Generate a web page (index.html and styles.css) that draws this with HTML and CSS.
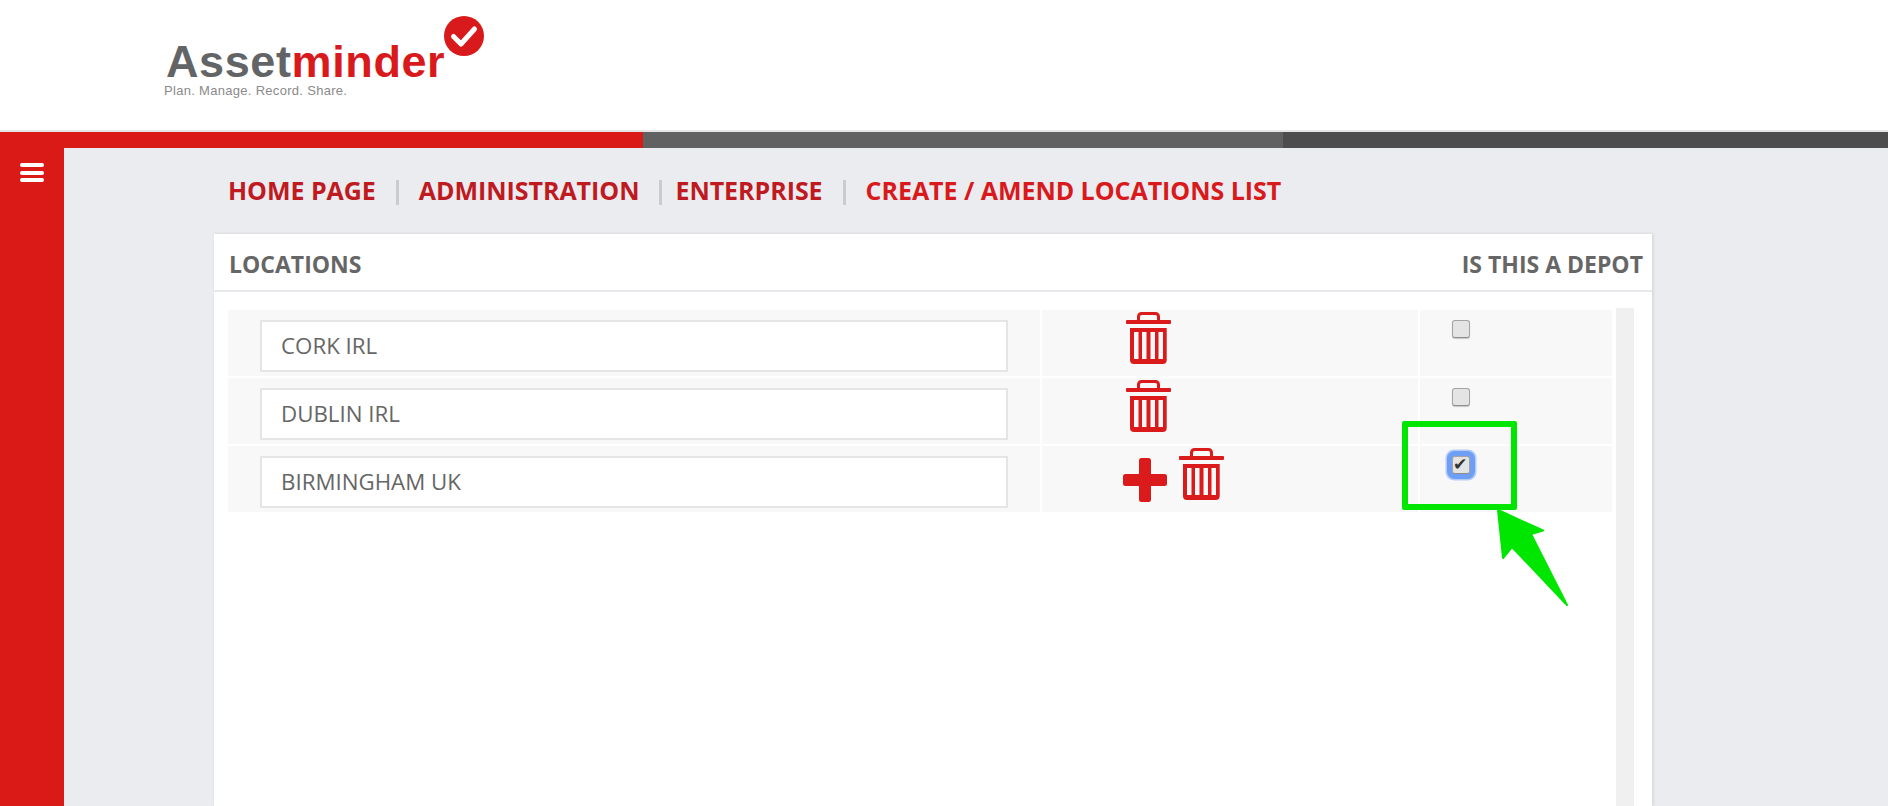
FILE: index.html
```html
<!DOCTYPE html>
<html lang="en">
<head>
    <title>Create / Amend Locations List</title>
    <link rel="stylesheet" href="styles.css">
</head>
<body>

<svg class="icon-defs" width="0" height="0">
    <symbol id="trash" viewBox="0 0 45 52">
        <path d="M12.5 9V4.5a3 3 0 0 1 3-3h14a3 3 0 0 1 3 3V9" fill="none" stroke="currentColor" stroke-width="3"/>
        <rect x="0" y="8" width="45" height="4" rx="1" fill="currentColor"/>
        <path fill="currentColor" fill-rule="evenodd" d="M4 16h36.7v32a4 4 0 0 1-4 4H8a4 4 0 0 1-4-4z M8 20h4.5v27H8z M16 20h4.5v27H16z M24.5 20h4.5v27h-4.5z M32.5 20h4.5v27h-4.5z"/>
    </symbol>
</svg>

<header class="site-header">
    <div class="logo">
        <svg class="logo-badge" viewBox="0 0 40 40">
            <circle cx="20" cy="20" r="20" fill="#d81a1c"/>
            <path d="M9.5 20.5l7.5 7.5L30.5 13" fill="none" stroke="#fff" stroke-width="5" stroke-linecap="round" stroke-linejoin="round"/>
        </svg>
        <div class="logo-name">Asset<span class="logo-red">minder</span></div>
        <div class="logo-tag">Plan. Manage. Record. Share.</div>
    </div>
</header>

<div class="color-bar">
    <div class="bar-red"></div>
    <div class="bar-grey"></div>
    <div class="bar-dark"></div>
</div>

<div class="layout">
    <aside class="sidebar">
        <button type="button" class="menu-btn" aria-label="Menu">
            <span></span>
            <span></span>
            <span></span>
        </button>
    </aside>

    <main class="content">
        <nav class="breadcrumb">
            <a href="#">HOME PAGE</a>
            <span class="sep"></span>
            <a href="#">ADMINISTRATION</a>
            <span class="sep sep-tight"></span>
            <a href="#">ENTERPRISE</a>
            <span class="sep"></span>
            <a href="#" class="current">CREATE / AMEND LOCATIONS LIST</a>
        </nav>

        <section class="card">
            <div class="card-head">
                <span>LOCATIONS</span>
                <span>IS THIS A DEPOT</span>
            </div>
            <div class="card-body">
                <div class="rows">
                    <div class="row">
                        <div class="cell cell-name"><input type="text" value="CORK IRL"></div>
                        <div class="cell cell-actions">
                            <svg class="trash"><use href="#trash"/></svg>
                        </div>
                        <div class="cell cell-check"><input type="checkbox"></div>
                    </div>
                    <div class="row">
                        <div class="cell cell-name"><input type="text" value="DUBLIN IRL"></div>
                        <div class="cell cell-actions">
                            <svg class="trash"><use href="#trash"/></svg>
                        </div>
                        <div class="cell cell-check"><input type="checkbox"></div>
                    </div>
                    <div class="row">
                        <div class="cell cell-name"><input type="text" value="BIRMINGHAM UK"></div>
                        <div class="cell cell-actions has-add">
                            <svg class="plus" viewBox="0 0 44 44">
                                <path fill="currentColor" d="M16 2.500A2.500 2.500 0 0 1 18.500 0h7A2.500 2.500 0 0 1 28 2.500V16h13.500a2.500 2.500 0 0 1 2.500 2.500v7a2.500 2.500 0 0 1-2.500 2.500H28v13.500a2.500 2.500 0 0 1-2.500 2.500h-7a2.500 2.500 0 0 1-2.500-2.500V28H2.500A2.500 2.500 0 0 1 0 25.500v-7A2.500 2.500 0 0 1 2.500 16H16z"/>
                            </svg>
                            <svg class="trash"><use href="#trash"/></svg>
                        </div>
                        <div class="cell cell-check"><input type="checkbox" class="focused" checked></div>
                    </div>
                </div>
                <div class="scroll-track"></div>
            </div>
        </section>
    </main>
</div>

<!-- green callout drawn over the screenshot -->
<div class="callout-box"></div>
<svg class="callout-arrow" viewBox="0 0 80 105">
    <path d="M2 2L47 22.500L35 26L71 97L16 39L7 50z" fill="#00e600" stroke="#00e600" stroke-width="2" stroke-linejoin="round"/>
</svg>

</body>
</html>
```

FILE: styles.css
```css
* {
  box-sizing: border-box;
}
html,
body {
  height: 100%;
}
body {
  margin: 0;
  height: 806px;
  overflow: hidden;
  background-color: #ebecf0;
  font-family: "Open Sans", sans-serif;
  display: flex;
  flex-direction: column;
  position: relative;
}
.icon-defs {
  position: absolute;
}

.site-header {
  height: 132px;
  background-color: white;
  border-bottom: 2px solid #e6e6e6;
  flex: none;
}
.logo {
  position: relative;
  width: 300px;
  margin-left: 164px;
  padding-top: 40px;
}
.logo-name {
  margin-left: 2px;
  font-family: "Liberation Sans", sans-serif;
  font-weight: bold;
  font-size: 45px;
  line-height: 44px;
  letter-spacing: 0.6px;
  color: #636466;
}
.logo-red {
  color: #d81a1c;
}
.logo-tag {
  font-family: "Liberation Sans", sans-serif;
  font-size: 13px;
  line-height: 14px;
  letter-spacing: 0.3px;
  color: #8a8a8a;
}
.logo-badge {
  position: absolute;
  left: 280px;
  top: 16px;
  width: 40px;
  height: 40px;
}

.color-bar {
  display: flex;
  height: 16px;
  flex: none;
}
.bar-red {
  width: 643px;
  background-color: #d91a17;
}
.bar-grey {
  width: 640px;
  background-color: #616161;
}
.bar-dark {
  flex: 1;
  background-color: #4d4d4d;
}

.layout {
  display: flex;
  flex: 1;
  min-height: 0;
}
.sidebar {
  width: 64px;
  flex: none;
  background-color: #d91a17;
  padding: 15px 0 0 20px;
}
.menu-btn {
  display: flex;
  flex-direction: column;
  gap: 3.500px;
  width: 24px;
  padding: 0;
  border: none;
  background: none;
}
.menu-btn span {
  display: block;
  height: 4px;
  border-radius: 2px;
  background-color: white;
}

.content {
  flex: 1;
  min-width: 0;
  padding: 0 236px 0 150px;
  display: flex;
  flex-direction: column;
}
.breadcrumb {
  display: flex;
  align-items: center;
  height: 86px;
  padding: 0 0 2px 14px;
  font-size: 25px;
  font-weight: bold;
  letter-spacing: -0.04px;
}
.breadcrumb a {
  color: #bf1a1f;
  text-decoration: none;
}
.breadcrumb a.current {
  color: #d91a1d;
}
.sep {
  width: 3px;
  height: 25px;
  margin: 4px 20px 0;
  background-color: #cbcbcd;
}
.sep-tight {
  margin-right: 13px;
}

.card {
  flex: 1;
  background-color: white;
  box-shadow: 1px 0 3px rgba(0, 0, 0, 0.12);
  display: flex;
  flex-direction: column;
  min-height: 0;
}
.card-head {
  display: flex;
  justify-content: space-between;
  align-items: center;
  height: 58px;
  padding: 4px 9px 0 15px;
  border-bottom: 2px solid #e8e9ed;
  color: #666;
  font-size: 23px;
  font-weight: bold;
  flex: none;
}
.card-body {
  flex: 1;
  display: flex;
  align-items: stretch;
  padding: 16px 18px 0 14px;
  gap: 4px;
  min-height: 0;
}
.rows {
  flex: 1;
  padding-top: 2px;
  display: flex;
  flex-direction: column;
  gap: 2px;
}
.row {
  display: grid;
  grid-template-columns: 812px 376px 192px;
  gap: 2px;
  height: 66px;
}
.cell {
  background-color: #f8f8f8;
}
.cell-name {
  padding: 10px 0 0 32px;
}
.cell-name input {
  width: 748px;
  height: 52px;
  padding: 0 19px 2px;
  border: 2px solid #e4e5e7;
  background-color: white;
  color: #666;
  font-family: "Open Sans", sans-serif;
  font-size: 22.300px;
}
.cell-actions {
  display: flex;
  align-items: flex-start;
  padding: 2px 0 0 84px;
  color: #db1a1c;
}
.cell-actions.has-add {
  padding-left: 81px;
}
.trash {
  width: 45px;
  height: 52px;
}
.plus {
  width: 44px;
  height: 44px;
  margin: 10px 12px 0 0;
}
.cell-check {
  padding: 10px 0 0 32px;
}
.cell-check input {
  appearance: none;
  display: block;
  position: relative;
  width: 18px;
  height: 18px;
  margin: 0;
  border: 1px solid #a4a4a4;
  border-bottom-color: #8f8f8f;
  border-radius: 3px;
  background-color: #e4e4e4;
  box-shadow: 0 1px 1px rgba(0, 0, 0, 0.2);
}
.cell-check input:checked::after {
  content: "\2714";
  position: absolute;
  left: 0;
  top: -2px;
  font-family: "DejaVu Sans", sans-serif;
  font-size: 17px;
  line-height: 18px;
  color: #333;
}
.cell-check input.focused {
  outline: none;
  box-shadow: 0 0 0 5px #6f9ff5, 0 0 0 6.500px #b3cbf7;
}
.scroll-track {
  width: 18px;
  background-color: #f0f0f1;
}

.callout-box {
  position: absolute;
  left: 1402px;
  top: 421px;
  width: 115px;
  height: 89px;
  border: 6px solid #00e600;
  border-radius: 2px;
}
.callout-arrow {
  position: absolute;
  left: 1496px;
  top: 508px;
  width: 80px;
  height: 105px;
}
```
